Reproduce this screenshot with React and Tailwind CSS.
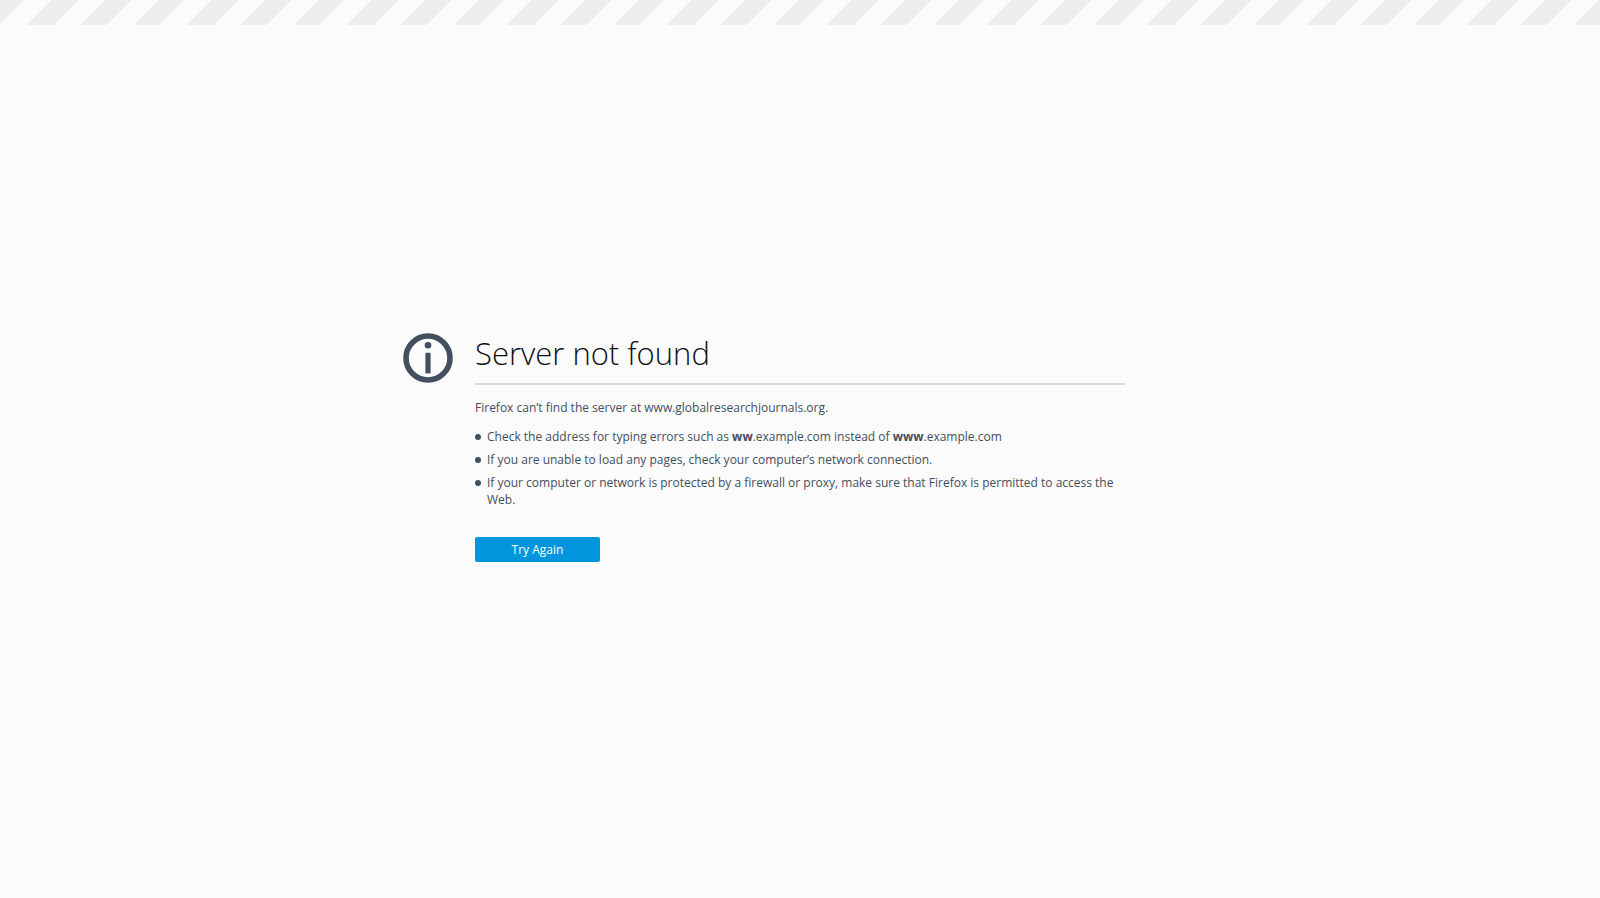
import React from "react";

function InfoIcon() {
  return (
    <svg viewBox="0 0 50 50" className="size-[50px] shrink-0" aria-hidden="true">
      <circle cx="25" cy="25" r="22" fill="none" stroke="#424f5e" strokeWidth="5.6" />
      <circle cx="25" cy="12.2" r="3.3" fill="#424f5e" />
      <rect x="22.4" y="19.8" width="5.2" height="20.6" fill="#424f5e" />
    </svg>
  );
}

function Tip({ children }) {
  return (
    <li className="flex gap-1.5">
      <span className="mt-1.5 size-1.5 shrink-0 rounded-full bg-[#424f5e]" />
      <span>{children}</span>
    </li>
  );
}

export default function App() {
  return (
    <div className="flex min-h-screen flex-col bg-[#fbfbfb] font-['Open_Sans','Noto_Sans',sans-serif] text-xs leading-[17px] text-[#424f5e]">
      <div className="h-[25px] bg-[size:160px_25px] bg-right-bottom bg-[image:repeating-linear-gradient(-45deg,#ededed_0_calc(100%*16/111),#fbfbfb_calc(100%*16/111)_calc(100%*32/111))]" />
      <main className="flex flex-1 items-center justify-center px-6 pb-[29px]">
        <div className="flex w-full max-w-[794px] gap-[22px]">
          <InfoIcon />
          <div className="min-w-0 max-w-[650px] flex-1">
            <h1 className="border-b-2 border-[#d9d9d9] pb-2.5 text-[31px] font-light leading-10 text-[#111]">
              Server not found
            </h1>
            <p className="mt-3.5">
              Firefox can’t find the server at www.globalresearchjournals.org.
            </p>
            <ul className="mt-3 flex flex-col gap-1.5">
              <Tip>
                Check the address for typing errors such as <strong>ww</strong>.example.com instead of{" "}
                <strong>www</strong>.example.com
              </Tip>
              <Tip>If you are unable to load any pages, check your computer’s network connection.</Tip>
              <Tip>
                If your computer or network is protected by a firewall or proxy, make sure that Firefox is
                permitted to access the Web.
              </Tip>
            </ul>
            <button
              type="button"
              className="mt-[29px] h-[25px] w-[125px] rounded-[2px] bg-[#0095dd] text-white"
            >
              Try Again
            </button>
          </div>
        </div>
      </main>
    </div>
  );
}
